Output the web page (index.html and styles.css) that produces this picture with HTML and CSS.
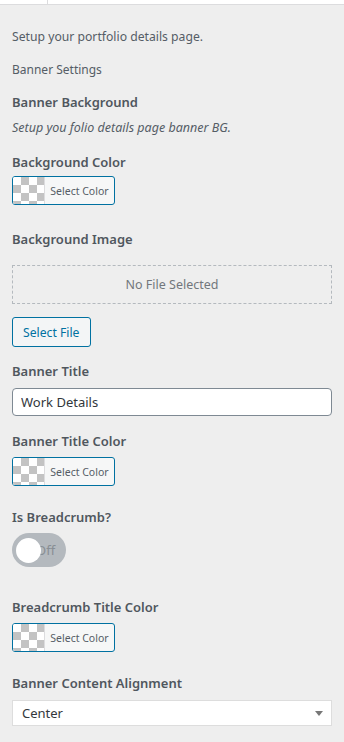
FILE: index.html
```
<!doctype html>
<html lang="en">
  <head>
    <title>Portfolio Details</title>
    <meta charset="UTF-8" />
    <meta name="viewport" content="width=device-width, initial-scale=1" />
    <link rel="stylesheet" href="styles.css">
  </head>

  <body>
    <div class="topbar">
      <div class="topbar-tab"></div>
    </div>

    <div class="panel">
      <p class="intro">Setup your portfolio details page.</p>
      <p class="section-title">Banner Settings</p>

      <h3 class="group-title">Banner Background</h3>
      <p class="group-desc">Setup you folio details page banner BG.</p>

      <div class="field field-first">
        <label class="field-label">Background Color</label>
        <button class="color-btn" type="button">
          <span class="swatch"></span>
          <span class="color-text">Select Color</span>
        </button>
      </div>

      <div class="field field-image">
        <label class="field-label label-image">Background Image</label>
        <div class="file-box">No File Selected</div>
        <button class="file-btn" type="button">Select File</button>
      </div>

      <div class="field field-title">
        <label class="field-label label-title" for="banner-title">Banner Title</label>
        <input class="text-input" type="text" id="banner-title" value="Work Details" />
      </div>

      <div class="field field-title-color">
        <label class="field-label">Banner Title Color</label>
        <button class="color-btn" type="button">
          <span class="swatch"></span>
          <span class="color-text">Select Color</span>
        </button>
      </div>

      <div class="field field-toggle">
        <label class="field-label">Is Breadcrumb?</label>
        <div class="toggle">
          <span class="toggle-text">Off</span>
          <span class="toggle-knob"></span>
        </div>
      </div>

      <div class="field field-crumb-color">
        <label class="field-label">Breadcrumb Title Color</label>
        <button class="color-btn" type="button">
          <span class="swatch"></span>
          <span class="color-text">Select Color</span>
        </button>
      </div>

      <div class="field field-align">
        <label class="field-label label-align">Banner Content Alignment</label>
        <div class="select-box">
          <span>Center</span>
          <span class="select-arrow"></span>
        </div>
      </div>
    </div>
  </body>
</html>
```

FILE: styles.css
```
body {
  margin: 0;
  padding: 0;
  background-color: #eeeeee;
  font-family: 'Noto Sans', 'Open Sans', sans-serif;
  font-size: 13px;
  color: #555d66;
}

.topbar {
  height: 4px;
  background-color: #ffffff;
  border-bottom: 1px solid #dcdcde;
}

.topbar-tab {
  width: 47px;
  height: 4px;
  border-right: 1px solid #dcdcde;
}

.panel {
  padding: 0 12px;
}

p {
  margin: 0;
}

.intro {
  margin-top: 22px;
  font-size: 12.2px;
  line-height: 20px;
}

.section-title {
  margin-top: 13px;
  font-size: 12px;
  line-height: 20px;
}

.group-title {
  margin: 12px 0 0;
  font-size: 13px;
  font-weight: 600;
  line-height: 20px;
  color: #50575e;
}

.group-desc {
  margin-top: 6px;
  font-size: 12.5px;
  font-style: italic;
  line-height: 20px;
}

.field-label {
  display: block;
  font-weight: 600;
  line-height: 20px;
  color: #50575e;
  margin-bottom: 4px;
}

.field-first {
  margin-top: 14px;
}

.field-image {
  margin-top: 24px;
}

.label-image {
  margin-bottom: 16px;
}

.field-title {
  margin-top: 14px;
}

.label-title {
  margin-bottom: 7px;
}

.field-title-color {
  margin-top: 15px;
}

.field-title-color .field-label,
.field-toggle .field-label,
.field-crumb-color .field-label {
  margin-bottom: 6px;
}

.field-toggle {
  margin-top: 21px;
}

.field-crumb-color {
  margin-top: 30px;
}

.field-align {
  margin-top: 21px;
}

.label-align {
  margin-bottom: 7px;
}

.color-btn {
  display: flex;
  align-items: stretch;
  width: 103px;
  height: 29px;
  padding: 0;
  border: 1px solid #0071a1;
  border-radius: 3px;
  background-color: #f6f7f7;
  overflow: hidden;
  font-family: inherit;
  cursor: pointer;
}

.swatch {
  width: 31px;
  border-right: 1px solid #dcdcde;
  background-color: #ffffff;
  background-image:
    linear-gradient(45deg, #c3c3c3 25%, transparent 25%, transparent 75%, #c3c3c3 75%),
    linear-gradient(45deg, #c3c3c3 25%, transparent 25%, transparent 75%, #c3c3c3 75%);
  background-size: 16px 16px;
  background-position: 0 0, 8px 8px;
}

.color-text {
  flex: 1;
  align-self: center;
  font-size: 10.5px;
  color: #555d66;
  text-align: center;
}

.file-box {
  height: 37px;
  border: 1px dashed #b4b9be;
  display: flex;
  align-items: center;
  justify-content: center;
  font-size: 12.5px;
  color: #72777c;
}

.file-btn {
  margin-top: 13px;
  height: 30px;
  padding: 0 10px;
  border: 1px solid #0071a1;
  border-radius: 3px;
  background-color: #f3f5f6;
  color: #0071a1;
  font-family: inherit;
  font-size: 12.2px;
  cursor: pointer;
}

.text-input {
  display: block;
  width: 100%;
  height: 28px;
  padding: 0 8px;
  border: 1px solid #7e8993;
  border-radius: 4px;
  background-color: #ffffff;
  font-family: inherit;
  font-size: 13px;
  color: #32373c;
  box-sizing: border-box;
}

.toggle {
  position: relative;
  width: 54px;
  height: 34px;
  border-radius: 17px;
  background-color: #b4b9be;
}

.toggle-knob {
  position: absolute;
  left: 4px;
  top: 5px;
  width: 25px;
  height: 25px;
  border-radius: 50%;
  background-color: #ffffff;
}

.toggle-text {
  position: absolute;
  left: 24px;
  top: 7px;
  line-height: 20px;
  color: #888e94;
}

.select-box {
  display: flex;
  align-items: center;
  justify-content: space-between;
  height: 26px;
  padding: 0 8px 0 9px;
  border: 1px solid #dddddd;
  background-color: #ffffff;
  color: #32373c;
  box-sizing: border-box;
}

.select-arrow {
  width: 0;
  height: 0;
  border-left: 4px solid transparent;
  border-right: 4px solid transparent;
  border-top: 5px solid #777777;
}
```
